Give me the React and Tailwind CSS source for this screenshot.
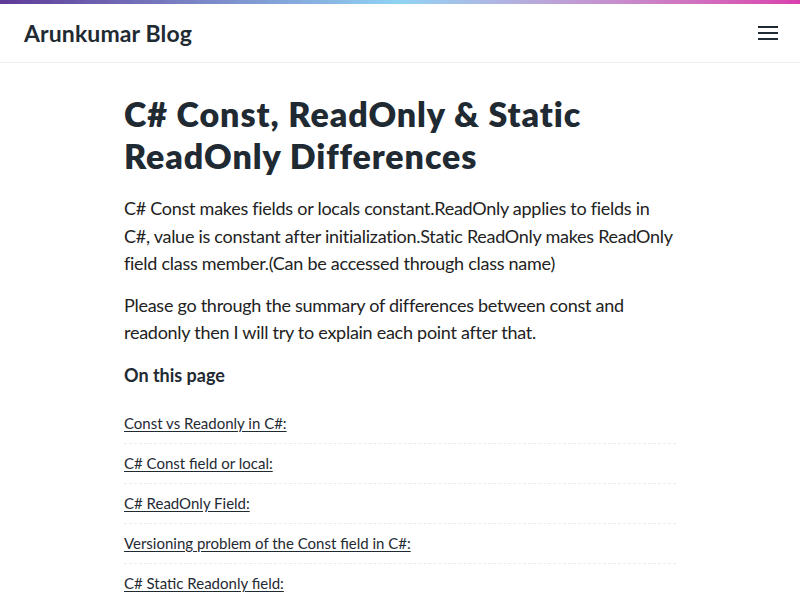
const links = [
  "Const vs Readonly in C#:",
  "C# Const field or local:",
  "C# ReadOnly Field:",
  "Versioning problem of the Const field in C#:",
  "C# Static Readonly field:",
];

export default function App() {
  return (
    <div className="min-h-screen bg-white text-[#1f2a33]" style={{ fontFamily: "Lato, 'Open Sans', sans-serif" }}>
      {/* top gradient strip */}
      <div className="h-1 bg-gradient-to-r from-[#5f3a98] via-[#8fd3f4] to-[#d93fae]" />

      {/* header */}
      <header className="h-[59px] flex items-center justify-between pl-6 pr-[22px] border-b border-[#eeeeee]">
        <a href="#" className="text-[23px] font-bold tracking-[0.005em] text-[#1f2a33]">
          Arunkumar Blog
        </a>
        <button className="w-5 h-8 flex flex-col items-center justify-center gap-[4px]">
          <span className="block w-5 h-[2px] bg-[#1f2a33]" />
          <span className="block w-5 h-[2px] bg-[#1f2a33]" />
          <span className="block w-5 h-[2px] bg-[#1f2a33]" />
        </button>
      </header>

      {/* article */}
      <main className="max-w-[552px] mx-auto pt-[30px]">
        <h1 className="text-[34px] leading-[42px] font-extrabold tracking-[0.027em]">
          C# Const, ReadOnly &amp; Static ReadOnly Differences
        </h1>

        <p className="mt-[18px] text-[18px] leading-[27.5px] tracking-[-0.015em] text-[#222]">
          C# Const makes fields or locals constant.ReadOnly applies to fields in
          C#, value is constant after initialization.Static ReadOnly makes ReadOnly
          field class member.(Can be accessed through class name)
        </p>

        <p className="mt-[14px] text-[18px] leading-[27.5px] tracking-[-0.015em] text-[#222]">
          Please go through the summary of differences between const and readonly
          then I will try to explain each point after that.
        </p>

        <h2 className="mt-[15px] text-[18px] leading-[27px] font-bold">On this page</h2>

        <ul className="mt-[15px]">
          {links.map((l) => (
            <li key={l} className="py-[6px] border-b border-dashed border-[#e8ecef]">
              <a href="#" className="text-[15px] leading-[27px] underline underline-offset-2 text-[#1f2a33]">
                {l}
              </a>
            </li>
          ))}
        </ul>
      </main>
    </div>
  );
}
